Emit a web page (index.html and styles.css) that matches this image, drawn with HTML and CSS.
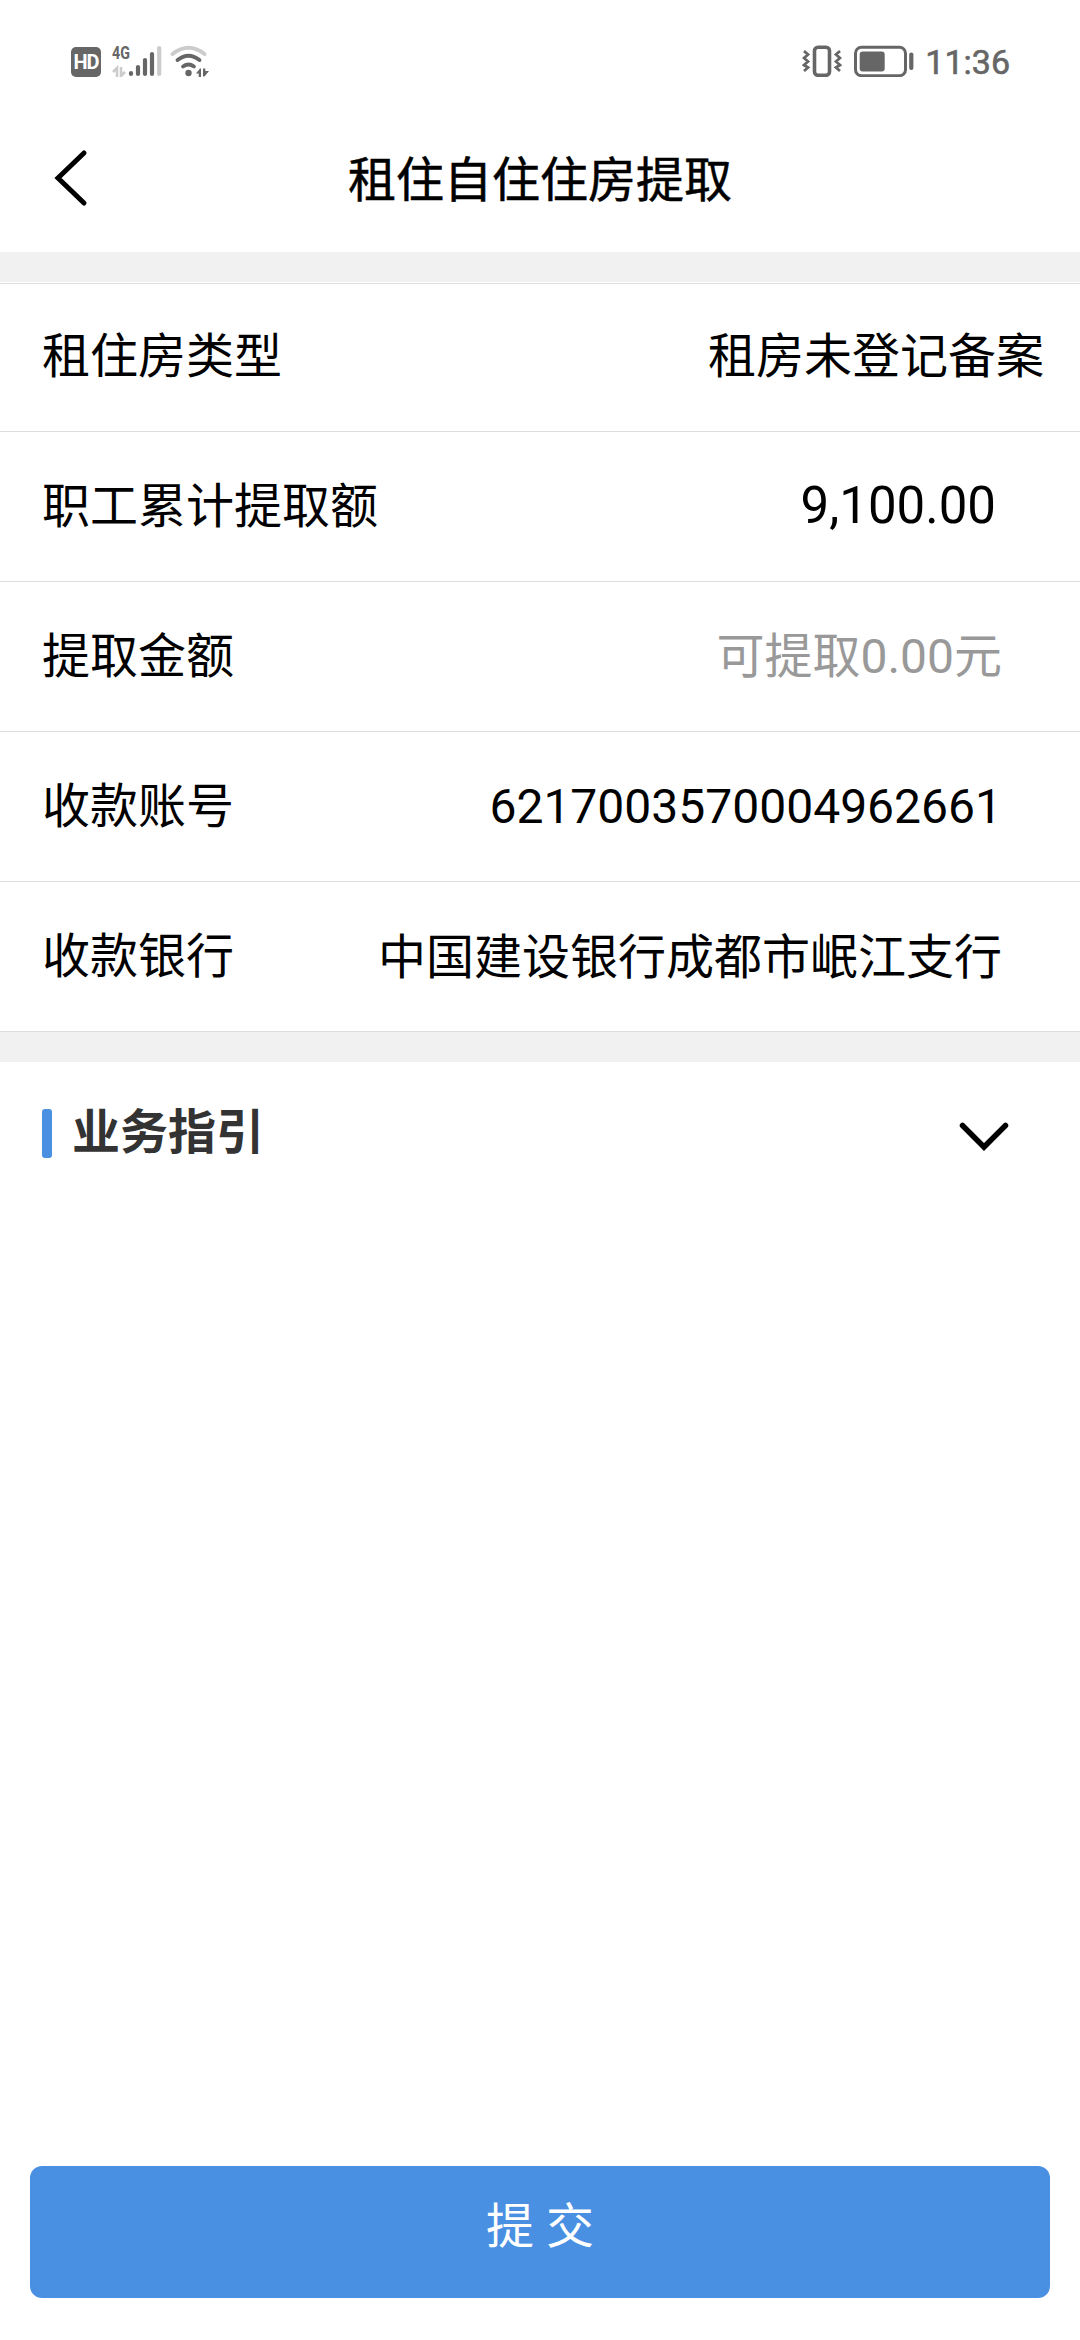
FILE: index.html
```
<!DOCTYPE html>
<html lang="zh-CN">

<head>
    <meta charset="UTF-8">
    <meta name="viewport" content="width=device-width, initial-scale=1.0">
    <title>租住自住住房提取</title>
    <link rel="stylesheet" href="styles.css">
</head>

<body>
    <div class="statusBar">
        <span class="hd">HD</span>
        <div class="signal">
            <span class="net">4G</span>
            <svg width="50" height="32" viewBox="0 0 50 32">
                <path d="M1 27l4-4v9M9 22v9l4-4" fill="none" stroke="#ccc" stroke-width="2.6" />
                <g stroke="#666" stroke-width="4.2" stroke-linecap="round">
                    <path d="M19 28v1M26 22v7M33 15v14M40 9v20" />
                    <path d="M47.2 3v26" stroke="#ccc" />
                </g>
            </svg>
        </div>
        <svg class="wifi" width="40" height="32" viewBox="0 0 40 32">
            <g fill="none" stroke="#666" stroke-width="3.8" stroke-linecap="round">
                <path d="M2.5 9Q18.5 -3.5 34.5 9" stroke="#ccc" />
                <path d="M7.5 15Q18.5 6.5 29.5 15" />
                <path d="M13 21.5Q18.5 17.5 24 21.5" />
            </g>
            <circle cx="18.5" cy="28" r="3.2" fill="#666" />
            <path d="M26 28.5l4-5h1v8.500h-2.300v-3.500zM33 23.500h2.300v2.500h3.700l-4.500 5.500H33z" fill="#666" />
        </svg>
        <div class="statusRight">
            <svg width="40" height="32" viewBox="0 0 40 32" fill="none" stroke="#666">
                <rect x="12.5" y="2.3" width="15" height="28" rx="3.5" stroke-width="3.6" />
                <path d="M2 6l4 3.500-4 3.500 4 3.500-4 3.500 4 2.500-4 3.500M38 6l-4 3.500 4 3.500-4 3.500 4 3.500-4 2.500 4 3.500" stroke-width="2.8" />
            </svg>
            <svg width="60" height="32" viewBox="0 0 60 32">
                <rect x="1.5" y="2.2" width="50" height="28.5" rx="6" fill="none" stroke="#666" stroke-width="3" />
                <rect x="5.7" y="6.5" width="25" height="20" rx="3" fill="#666" />
                <rect x="55.2" y="7.5" width="4.2" height="17.5" rx="2" fill="#666" />
            </svg>
            <span class="time">11:36</span>
        </div>
    </div>

    <div class="header">
        <svg class="back" width="36" height="60" viewBox="0 0 36 60">
            <path d="M32 5L6 30l26 25" fill="none" stroke="#000" stroke-width="5" stroke-linecap="round" />
        </svg>
        <h1>租住自住住房提取</h1>
    </div>

    <div class="form">
        <div class="row first">
            <label>租住房类型</label>
            <span class="value">租房未登记备案</span>
        </div>
        <div class="row">
            <label>职工累计提取额</label>
            <span class="value amount">9,100.00</span>
        </div>
        <div class="row">
            <label>提取金额</label>
            <span class="value hint">可提取0.00元</span>
        </div>
        <div class="row">
            <label>收款账号</label>
            <span class="value">6217003570004962661</span>
        </div>
        <div class="row">
            <label>收款银行</label>
            <span class="value bank">中国建设银行成都市岷江支行</span>
        </div>
    </div>

    <div class="guide">
        <h2>业务指引</h2>
        <svg width="52" height="32" viewBox="0 0 52 32">
            <path d="M4.5 4.5L26 26 47.5 4.5" fill="none" stroke="#000" stroke-width="5.5" stroke-linecap="round" />
        </svg>
    </div>

    <div class="footer">
        <button class="submit">提 交</button>
    </div>
</body>

</html>
```
FILE: styles.css
```
* {
    margin: 0;
    padding: 0;
    box-sizing: border-box;
}

body {
    display: flex;
    flex-direction: column;
    height: 2340px;
    background-color: #fff;
    color: #000;
    font-family: Roboto, "Noto Sans CJK SC", sans-serif;
    font-size: 48px;
    line-height: 60px;
}

svg {
    display: block;
    flex: none;
}

.statusBar {
    display: flex;
    align-items: flex-start;
    height: 108px;
    padding: 45px 71px 0;
    color: #666;
}

.hd {
    width: 30px;
    height: 30px;
    margin-top: 2px;
    border-radius: 5px;
    background-color: #666;
    color: #fff;
    text-align: center;
    font-size: 20px;
    font-weight: 700;
    letter-spacing: -1px;
    line-height: 31px;
}

.signal {
    position: relative;
    margin-left: 11px;
}

.net {
    position: absolute;
    left: 0;
    top: 0;
    font-size: 19px;
    font-weight: 700;
    line-height: 16px;
    transform: scaleX(0.75);
    transform-origin: left;
}

.wifi {
    margin-left: 8px;
}

.statusRight {
    display: flex;
    margin-left: auto;
    gap: 12px;
}

.time {
    margin-right: -1px;
    margin-left: -1px;
    font-size: 34px;
    font-weight: 400;
    line-height: 35px;
    -webkit-text-stroke: 0.6px #666;
}

.header {
    display: flex;
    align-items: center;
    height: 144px;
    padding: 0 52px 4px;
}

h1 {
    flex: 1;
    margin-right: 36px;
    padding-top: 5px;
    text-align: center;
    font-size: 48px;
    font-weight: 400;
    -webkit-text-stroke: 0.5px #000;
}

.form {
    padding-top: 1px;
    border-top: 30px solid #f1f1f1;
    border-bottom: 30px solid #f1f1f1;
}

.row {
    display: flex;
    justify-content: space-between;
    align-items: center;
    height: 150px;
    padding: 0 78px 0 42px;
    border-bottom: 1px solid #ddd;
}

.first {
    height: 149px;
    padding-right: 36px;
    padding-bottom: 2px;
    border-top: 1px solid #ddd;
}

.amount {
    padding-right: 6px;
    padding-bottom: 2px;
    font-size: 51px;
}

.hint {
    color: #999;
}

.bank {
    padding-top: 2px;
}

.guide {
    display: flex;
    justify-content: space-between;
    align-items: center;
    height: 144px;
    padding: 0 70px 2px 42px;
}

.guide svg {
    margin-top: 8px;
}

h2 {
    display: flex;
    align-items: center;
    color: #333;
    font-size: 48px;
}

h2::before {
    content: '';
    width: 10px;
    height: 49px;
    margin-right: 20px;
    border-radius: 3px;
    background-color: #4a90e2;
}

.footer {
    margin-top: auto;
    padding: 0 30px 42px;
}

.submit {
    display: block;
    width: 100%;
    height: 132px;
    padding-bottom: 20px;
    border: none;
    border-radius: 12px;
    background-color: #4a90e2;
    color: #fff;
    font-family: inherit;
    font-size: 48px;
}
```
